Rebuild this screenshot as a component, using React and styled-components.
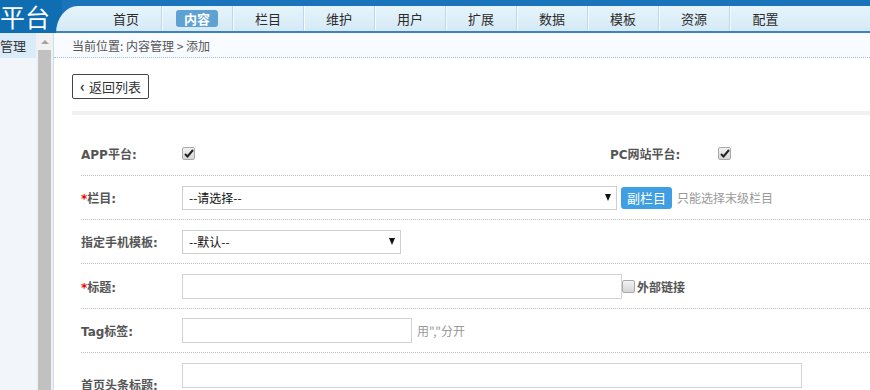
import styled, { createGlobalStyle } from "styled-components";

const GlobalStyle = createGlobalStyle`
  html, body {
    margin: 0;
    padding: 0;
    overflow: hidden;
    background: #ffffff;
    font-family: Tahoma, "DejaVu Sans", "Noto Sans CJK SC", sans-serif;
    font-size: 12px;
    color: #333;
  }
`;

const Page = styled.div`
  width: 870px;
  height: 390px;
  display: flex;
  flex-direction: column;
  overflow: hidden;
`;

const Header = styled.div`
  height: 33px;
  display: flex;
  background: #1a74bb;
  flex-shrink: 0;
`;

const Logo = styled.div`
  width: 62px;
  background: #0f6db2;
  color: #fff;
  font-size: 25px;
  line-height: 33px;
  font-family: "Noto Sans CJK SC", sans-serif;
  white-space: nowrap;
  overflow: hidden;
  margin-right: -6px;
`;

const Nav = styled.div`
  flex: 1;
  margin-top: 6px;
  display: flex;
  align-items: center;
  padding-left: 35px;
  background: linear-gradient(#e6f5fc, #d5e9f6);
  border-top-left-radius: 22px 27px;
  border-bottom: 2px solid #3c82bd;
`;

const NavItem = styled.div`
  width: 71px;
  height: 25px;
  box-sizing: border-box;
  display: flex;
  align-items: center;
  justify-content: center;
  border-right: 1px solid #bfd7e8;
  box-shadow: 1px 0 0 #f4fbff;
  font-family: "Noto Sans CJK SC", sans-serif;
  font-size: 13px;
  color: #2b2b2b;
  &:last-child {
    border-right: none;
    box-shadow: none;
  }
`;

const NavPill = styled.span`
  padding: 0 8px;
  height: 17px;
  line-height: 17px;
  border-radius: 3px;
  background: ${(p) => (p.$active ? "#5ea1d3" : "transparent")};
  color: ${(p) => (p.$active ? "#ffffff" : "#2b2b2b")};
  font-weight: ${(p) => (p.$active ? "bold" : "normal")};
`;

const Body = styled.div`
  flex: 1;
  display: flex;
  min-height: 0;
`;

const Sidebar = styled.div`
  width: 36px;
  background: #f2f6fa;
  flex-shrink: 0;
`;

const SideItem = styled.div`
  height: 25px;
  line-height: 25px;
  background: #daebfa;
  font-family: "Noto Sans CJK SC", sans-serif;
  font-size: 13px;
  color: #333;
  white-space: nowrap;
  overflow: hidden;
  direction: rtl;
  text-align: right;
  padding-right: 10px;
`;

const ScrollTrack = styled.div`
  width: 17px;
  background: #f1f1f1;
  border-right: 1px solid #c9def0;
  display: flex;
  flex-direction: column;
  align-items: center;
  flex-shrink: 0;
`;

const ScrollArrow = styled.div`
  height: 17px;
  display: flex;
  align-items: center;
  justify-content: center;
  &::before {
    content: "";
    border-left: 4px solid transparent;
    border-right: 4px solid transparent;
    border-bottom: 4px solid #a3a3a3;
  }
`;

const ScrollThumb = styled.div`
  width: 13px;
  flex: 1;
  background: #c1c1c1;
`;

const Main = styled.div`
  flex: 1;
  display: flex;
  flex-direction: column;
  min-width: 0;
`;

const Crumb = styled.div`
  height: 24px;
  line-height: 25px;
  padding-left: 18px;
  background: #f8fbff;
  border-bottom: 1px dotted #9cc7ea;
  font-family: "Noto Sans CJK SC", sans-serif;
  color: #555;
  font-size: 12px;
`;

const Content = styled.div`
  padding: 16px 0 0 18px;
`;

const BackButton = styled.div`
  width: 75px;
  height: 23px;
  border: 1px solid #444;
  border-radius: 2px;
  display: flex;
  align-items: center;
  justify-content: center;
  gap: 4px;
  font-family: "Noto Sans CJK SC", sans-serif;
  font-size: 13px;
  color: #333;
  box-sizing: content-box;
`;

const Divider = styled.div`
  height: 4px;
  background: #f1f1f1;
  margin-top: 12px;
`;

const Form = styled.div`
  margin-top: 17px;
  padding-left: 9px;
`;

const Row = styled.div`
  display: flex;
  align-items: ${(p) => (p.$top ? "flex-start" : "center")};
  height: ${(p) => p.$h || 44}px;
  border-bottom: ${(p) => (p.$last ? "none" : "1px dotted #bdbdbd")};
  box-sizing: border-box;
`;

const Label = styled.div`
  width: ${(p) => p.$w || 101}px;
  flex-shrink: 0;
  font-weight: bold;
  color: #555;
  font-size: 12px;
  font-family: Tahoma, "DejaVu Sans", "Noto Sans CJK SC", sans-serif;
  white-space: nowrap;
  padding-top: ${(p) => p.$pt || 0}px;
`;

const Star = styled.span`
  color: #e00;
`;

const Cell = styled.div`
  display: flex;
  align-items: center;
  flex: ${(p) => (p.$grow ? 1 : "none")};
  width: ${(p) => (p.$w ? `${p.$w}px` : "auto")};
  padding-top: ${(p) => p.$pt || 0}px;
`;

const Check = styled.span`
  width: 11px;
  height: 11px;
  border: 1px solid #a9a9a9;
  border-radius: 2px;
  background: linear-gradient(#f2f2f2, #d6d6d6);
  display: inline-flex;
  align-items: center;
  justify-content: center;
  flex-shrink: 0;
`;

const Select = styled.div`
  width: ${(p) => p.$w}px;
  height: 24px;
  border: 1px solid #cfcfcf;
  box-sizing: border-box;
  display: flex;
  align-items: center;
  justify-content: space-between;
  padding: 0 5px 0 6px;
  font-family: "Noto Sans CJK SC", sans-serif;
  font-size: 12px;
  color: #111;
  &::after {
    content: "";
    border-left: 3.5px solid transparent;
    border-right: 3.5px solid transparent;
    border-top: 7px solid #111;
  }
`;

const Input = styled.div`
  width: ${(p) => p.$w}px;
  height: 25px;
  border: 1px solid #d3d3d3;
  box-sizing: border-box;
`;

const BlueButton = styled.div`
  margin-left: 4px;
  height: 22px;
  padding: 0 6px;
  line-height: 22px;
  border-radius: 3px;
  background: #3f9fe2;
  color: #fff;
  font-family: "Noto Sans CJK SC", sans-serif;
  font-size: 13px;
`;

const Hint = styled.span`
  margin-left: 5px;
  color: #999;
  font-family: "Noto Sans CJK SC", sans-serif;
  font-size: 12px;
`;

const CheckLabel = styled.span`
  font-weight: bold;
  color: #555;
  font-family: "Noto Sans CJK SC", sans-serif;
  font-size: 12px;
  margin-left: 2px;
`;

const Chevron = styled.span`
  font-size: 15px;
  font-weight: bold;
  line-height: 1;
  margin-top: -2px;
`;

const Tick = () => (
  <svg width="10" height="9" viewBox="0 0 10 9">
    <path d="M1 5 L3.5 7.5 L9 1" fill="none" stroke="#222" strokeWidth="2" />
  </svg>
);

const navItems = ["首页", "内容", "栏目", "维护", "用户", "扩展", "数据", "模板", "资源", "配置"];

const App = () => {
  return (
    <Page>
      <GlobalStyle />
      <Header>
        <Logo>平台</Logo>
        <Nav>
          {navItems.map((item) => (
            <NavItem key={item}>
              <NavPill $active={item === "内容"}>{item}</NavPill>
            </NavItem>
          ))}
        </Nav>
      </Header>
      <Body>
        <Sidebar>
          <SideItem>内容管理</SideItem>
        </Sidebar>
        <ScrollTrack>
          <ScrollArrow />
          <ScrollThumb />
        </ScrollTrack>
        <Main>
          <Crumb>当前位置: 内容管理 &gt; 添加</Crumb>
          <Content>
            <BackButton>
              <Chevron>‹</Chevron>返回列表
            </BackButton>
            <Divider />
            <Form>
              <Row>
                <Label>APP平台:</Label>
                <Cell $grow>
                  <Check>
                    <Tick />
                  </Check>
                </Cell>
                <Label $w={108}>PC网站平台:</Label>
                <Cell $w={152}>
                  <Check>
                    <Tick />
                  </Check>
                </Cell>
              </Row>
              <Row>
                <Label>
                  <Star>*</Star>栏目:
                </Label>
                <Cell>
                  <Select $w={435}>--请选择--</Select>
                  <BlueButton>副栏目</BlueButton>
                  <Hint>只能选择末级栏目</Hint>
                </Cell>
              </Row>
              <Row>
                <Label>指定手机模板:</Label>
                <Cell>
                  <Select $w={219}>--默认--</Select>
                </Cell>
              </Row>
              <Row $h={45}>
                <Label>
                  <Star>*</Star>标题:
                </Label>
                <Cell>
                  <Input $w={440} />
                  <Check />
                  <CheckLabel>外部链接</CheckLabel>
                </Cell>
              </Row>
              <Row>
                <Label>Tag标签:</Label>
                <Cell>
                  <Input $w={230} />
                  <Hint>用","分开</Hint>
                </Cell>
              </Row>
              <Row $h={60} $top $last>
                <Label $pt={23}>首页头条标题:</Label>
                <Cell $pt={10}>
                  <Input $w={620} />
                </Cell>
              </Row>
            </Form>
          </Content>
        </Main>
      </Body>
    </Page>
  );
};

export default App;
